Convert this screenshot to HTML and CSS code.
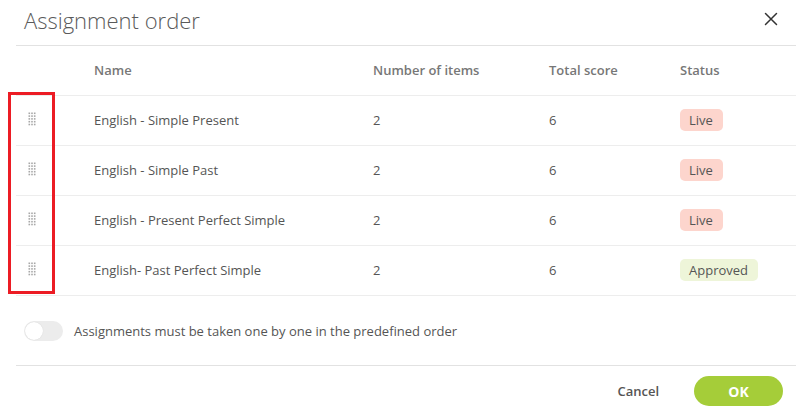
FILE: index.html
```html
<!DOCTYPE html>
<html>
<head>
<meta charset="utf-8">
<link rel="stylesheet" href="styles.css">
</head>
<body>
<div class="dialog">
  <div class="header">
    <h1 class="title">Assignment order</h1>
    <button class="close" aria-label="Close">
      <svg width="14" height="14" viewBox="0 0 14 14"><path d="M1.5 1.5 L12.5 12.5 M12.5 1.5 L1.5 12.5" stroke="#333" stroke-width="1.5" stroke-linecap="round"/></svg>
    </button>
  </div>
  <div class="table">
    <div class="row head">
      <div class="c-handle"></div>
      <div class="c-name">Name</div>
      <div class="c-num">Number of items</div>
      <div class="c-score">Total score</div>
      <div class="c-status">Status</div>
    </div>
    <div class="row">
      <div class="c-handle"><svg class="handle" width="8" height="15" viewBox="0 0 8 15"><g fill="#a8a8a8"><rect x="0.5" y="0.5" width="1.6" height="1.6"/><rect x="3.2" y="0.5" width="1.6" height="1.6"/><rect x="5.9" y="0.5" width="1.6" height="1.6"/><rect x="0.5" y="3.3" width="1.6" height="1.6"/><rect x="3.2" y="3.3" width="1.6" height="1.6"/><rect x="5.9" y="3.3" width="1.6" height="1.6"/><rect x="0.5" y="6.1" width="1.6" height="1.6"/><rect x="3.2" y="6.1" width="1.6" height="1.6"/><rect x="5.9" y="6.1" width="1.6" height="1.6"/><rect x="0.5" y="8.9" width="1.6" height="1.6"/><rect x="3.2" y="8.9" width="1.6" height="1.6"/><rect x="5.9" y="8.9" width="1.6" height="1.6"/><rect x="0.5" y="11.7" width="1.6" height="1.6"/><rect x="3.2" y="11.7" width="1.6" height="1.6"/><rect x="5.9" y="11.7" width="1.6" height="1.6"/></g></svg></div>
      <div class="c-name">English - Simple Present</div>
      <div class="c-num">2</div>
      <div class="c-score">6</div>
      <div class="c-status"><span class="badge live">Live</span></div>
    </div>
    <div class="row">
      <div class="c-handle"><svg class="handle" width="8" height="15" viewBox="0 0 8 15"><g fill="#a8a8a8"><rect x="0.5" y="0.5" width="1.6" height="1.6"/><rect x="3.2" y="0.5" width="1.6" height="1.6"/><rect x="5.9" y="0.5" width="1.6" height="1.6"/><rect x="0.5" y="3.3" width="1.6" height="1.6"/><rect x="3.2" y="3.3" width="1.6" height="1.6"/><rect x="5.9" y="3.3" width="1.6" height="1.6"/><rect x="0.5" y="6.1" width="1.6" height="1.6"/><rect x="3.2" y="6.1" width="1.6" height="1.6"/><rect x="5.9" y="6.1" width="1.6" height="1.6"/><rect x="0.5" y="8.9" width="1.6" height="1.6"/><rect x="3.2" y="8.9" width="1.6" height="1.6"/><rect x="5.9" y="8.9" width="1.6" height="1.6"/><rect x="0.5" y="11.7" width="1.6" height="1.6"/><rect x="3.2" y="11.7" width="1.6" height="1.6"/><rect x="5.9" y="11.7" width="1.6" height="1.6"/></g></svg></div>
      <div class="c-name">English - Simple Past</div>
      <div class="c-num">2</div>
      <div class="c-score">6</div>
      <div class="c-status"><span class="badge live">Live</span></div>
    </div>
    <div class="row">
      <div class="c-handle"><svg class="handle" width="8" height="15" viewBox="0 0 8 15"><g fill="#a8a8a8"><rect x="0.5" y="0.5" width="1.6" height="1.6"/><rect x="3.2" y="0.5" width="1.6" height="1.6"/><rect x="5.9" y="0.5" width="1.6" height="1.6"/><rect x="0.5" y="3.3" width="1.6" height="1.6"/><rect x="3.2" y="3.3" width="1.6" height="1.6"/><rect x="5.9" y="3.3" width="1.6" height="1.6"/><rect x="0.5" y="6.1" width="1.6" height="1.6"/><rect x="3.2" y="6.1" width="1.6" height="1.6"/><rect x="5.9" y="6.1" width="1.6" height="1.6"/><rect x="0.5" y="8.9" width="1.6" height="1.6"/><rect x="3.2" y="8.9" width="1.6" height="1.6"/><rect x="5.9" y="8.9" width="1.6" height="1.6"/><rect x="0.5" y="11.7" width="1.6" height="1.6"/><rect x="3.2" y="11.7" width="1.6" height="1.6"/><rect x="5.9" y="11.7" width="1.6" height="1.6"/></g></svg></div>
      <div class="c-name">English - Present Perfect Simple</div>
      <div class="c-num">2</div>
      <div class="c-score">6</div>
      <div class="c-status"><span class="badge live">Live</span></div>
    </div>
    <div class="row">
      <div class="c-handle"><svg class="handle" width="8" height="15" viewBox="0 0 8 15"><g fill="#a8a8a8"><rect x="0.5" y="0.5" width="1.6" height="1.6"/><rect x="3.2" y="0.5" width="1.6" height="1.6"/><rect x="5.9" y="0.5" width="1.6" height="1.6"/><rect x="0.5" y="3.3" width="1.6" height="1.6"/><rect x="3.2" y="3.3" width="1.6" height="1.6"/><rect x="5.9" y="3.3" width="1.6" height="1.6"/><rect x="0.5" y="6.1" width="1.6" height="1.6"/><rect x="3.2" y="6.1" width="1.6" height="1.6"/><rect x="5.9" y="6.1" width="1.6" height="1.6"/><rect x="0.5" y="8.9" width="1.6" height="1.6"/><rect x="3.2" y="8.9" width="1.6" height="1.6"/><rect x="5.9" y="8.9" width="1.6" height="1.6"/><rect x="0.5" y="11.7" width="1.6" height="1.6"/><rect x="3.2" y="11.7" width="1.6" height="1.6"/><rect x="5.9" y="11.7" width="1.6" height="1.6"/></g></svg></div>
      <div class="c-name">English- Past Perfect Simple</div>
      <div class="c-num">2</div>
      <div class="c-score">6</div>
      <div class="c-status"><span class="badge approved">Approved</span></div>
    </div>
    <div class="highlight"></div>
  </div>
  <div class="option">
    <span class="toggle"><span class="knob"></span></span>
    <span class="option-label">Assignments must be taken one by one in the predefined order</span>
  </div>
  <div class="footer">
    <button class="btn-cancel">Cancel</button>
    <button class="btn-ok">OK</button>
  </div>
</div>
</body>
</html>
```
FILE: styles.css
```css
* { box-sizing: border-box; }
html, body { margin: 0; padding: 0; background: #fff; }
body {
  font-family: "Open Sans", "Liberation Sans", sans-serif;
  color: #555;
  font-size: 13px;
  width: 796px;
  height: 411px;
  overflow: hidden;
}
.dialog { padding-left: 16px; }
.header {
  height: 46px;
  border-bottom: 1px solid #e2e2e2;
  display: flex;
  align-items: center;
  justify-content: space-between;
  padding: 0 18px 0 8px;
}
.title {
  margin: 0;
  font-size: 22px;
  font-weight: 300;
  color: #5a5a5a;
  line-height: 1;
  padding-bottom: 6px;
}
.close {
  border: 0;
  background: none;
  padding: 0;
  width: 14px;
  height: 14px;
  display: flex;
  margin-bottom: 7px;
}
.table { position: relative; }
.row {
  display: flex;
  align-items: center;
  height: 50px;
  padding-bottom: 2px;
  border-bottom: 1px solid #ededed;
}
.row.head {
  font-weight: 600;
  color: #777;
}
.c-handle { width: 78px; display: flex; padding-left: 12px; }
.c-name { width: 279px; }
.c-num { width: 176px; }
.c-score { width: 131px; }
.c-status { flex: 1; }
.handle { display: block; }
.badge {
  display: inline-block;
  padding: 0 10px 0 9px;
  height: 22px;
  line-height: 22px;
  border-radius: 5px;
  color: #555;
}
.badge.live { background: #fdd5cd; }
.badge.approved { background: #eef5d9; }
.highlight {
  position: absolute;
  left: -8px;
  top: 46px;
  width: 47px;
  height: 202px;
  border: 3px solid #ec1c24;
  pointer-events: none;
}
.option {
  height: 70px;
  display: flex;
  align-items: center;
  gap: 11px;
  padding-left: 8px;
  border-bottom: 1px solid #e2e2e2;
}
.toggle {
  width: 39px;
  height: 20px;
  border-radius: 10px;
  background: #ececec;
  position: relative;
  display: inline-block;
}
.knob {
  position: absolute;
  left: 1px;
  top: 1px;
  width: 18px;
  height: 18px;
  border-radius: 50%;
  background: #fff;
  box-shadow: 0 0 1px rgba(0,0,0,0.15);
}
.footer {
  display: flex;
  justify-content: flex-end;
  align-items: center;
  padding-top: 10px;
  padding-right: 13px;
}
.btn-cancel {
  border: 0;
  background: none;
  font-family: inherit;
  font-size: 13px;
  font-weight: 600;
  color: #555;
  padding: 0;
  margin-right: 35px;
}
.btn-ok {
  border: 0;
  background: #a5cd39;
  color: #fff;
  font-family: inherit;
  font-size: 14px;
  font-weight: 700;
  width: 89px;
  height: 30px;
  border-radius: 15px;
}
```
